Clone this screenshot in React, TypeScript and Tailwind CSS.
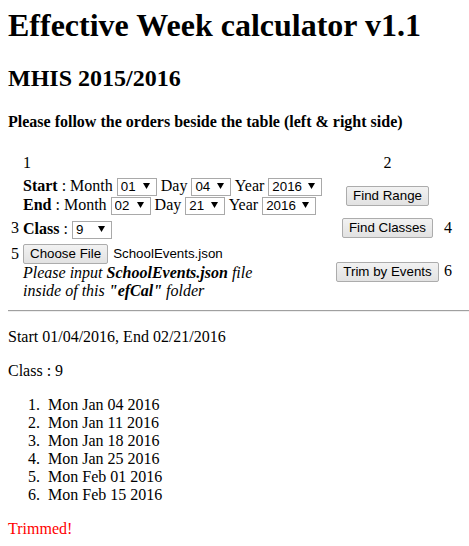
import React from 'react'

const sans = "font-['Liberation_Sans',Arial,sans-serif]"

const weeks = ['Mon Jan 04 2016', 'Mon Jan 11 2016', 'Mon Jan 18 2016', 'Mon Jan 25 2016', 'Mon Feb 01 2016', 'Mon Feb 15 2016']

function Sel({ value, w }: { value: string; w: string }) {
    return (
        <span className={`relative inline-block h-[18px] shrink-0 ${w}`}>
            <select defaultValue={value} className={`${sans} appearance-none w-full h-full bg-white border border-[#a9a9a9] pl-[3px] text-[13.33px] leading-[16px] text-black rounded-none`}>
                <option value={value}>{value}</option>
            </select>
            <svg className="absolute right-[7px] top-[6px] pointer-events-none" width="7" height="6" viewBox="0 0 7 6">
                <path d="M0 0H7L3.5 6Z" fill="#000" />
            </svg>
        </span>
    )
}

function Btn({ children }: { children: React.ReactNode }) {
    return (
        <button className={`${sans} h-[20px] px-[6px] text-[13.33px] leading-[18px] text-black border border-[#acacac] rounded-[2px] bg-gradient-to-b from-[#f2f2f2] to-[#e2e2e2]`}>
            {children}
        </button>
    )
}

export default function App() {
    return (
        <div className="px-2 pb-4 text-black bg-white font-['Liberation_Serif','Times_New_Roman',serif] text-[16px] leading-[18px]">
            <h1 className="pt-[7px] text-[32px] leading-[37px] font-bold">Effective Week calculator v1.1</h1>
            <h2 className="mt-[20px] text-[24px] leading-[28px] font-bold">MHIS 2015/2016</h2>
            <h4 className="mt-[21px] font-bold">Please follow the orders beside the table (left &amp; right side)</h4>

            <div className="mt-[23px] grid grid-cols-[14px_309px_113px_auto] gap-y-1 items-center">
                {/* row 1 */}
                <div />
                <div className="pl-px">1</div>
                <div className="text-center">2</div>
                <div />

                {/* row 2 */}
                <div />
                <div className="pl-px whitespace-pre">
                    <div className="flex items-center h-[19px]">
                        <span className="font-bold">Start</span><span> : Month </span>
                        <Sel value="01" w="w-[40px]" /><span> Day </span>
                        <Sel value="04" w="w-[40px]" /><span> Year </span>
                        <Sel value="2016" w="w-[54px]" />
                    </div>
                    <div className="flex items-center h-[19px]">
                        <span className="font-bold">End</span><span> : Month </span>
                        <Sel value="02" w="w-[40px]" /><span> Day </span>
                        <Sel value="21" w="w-[40px]" /><span> Year </span>
                        <Sel value="2016" w="w-[54px]" />
                    </div>
                </div>
                <div className="flex justify-center pt-px"><Btn>Find Range</Btn></div>
                <div />

                {/* row 3 */}
                <div className="pl-[3px]">3</div>
                <div className="pl-px flex items-center whitespace-pre pt-px">
                    <span className="font-bold">Class</span><span> : </span>
                    <Sel value="9" w="w-[40px]" />
                </div>
                <div className="flex justify-center"><Btn>Find Classes</Btn></div>
                <div>4</div>

                {/* row 4 */}
                <div className="pl-[3px] self-start pt-[3px]">5</div>
                <div className="pl-px">
                    <div className="flex items-center h-[22px] gap-[5px] pt-px">
                        <Btn>Choose File</Btn>
                        <span className={`${sans} text-[13.33px]`}>SchoolEvents.json</span>
                    </div>
                    <p className="italic">
                        Please input <b>SchoolEvents.json</b> file<br />
                        inside of this <b>"efCal"</b> folder
                    </p>
                </div>
                <div className="flex justify-center pt-px"><Btn>Trim by Events</Btn></div>
                <div>6</div>
            </div>

            <hr className="mt-[10px] -mr-2 border-t border-t-[#a0a0a0] border-b border-b-[#eeeeee]" />

            <p className="mt-[16px]">Start 01/04/2016, End 02/21/2016</p>
            <p className="mt-[16px]">Class : 9</p>
            <ol className="mt-[16px] pl-[20px]">
                {weeks.map((w, i) => (
                    <li key={w} className="flex">
                        <span className="w-[20px]">{i + 1}.</span>
                        <span>{w}</span>
                    </li>
                ))}
            </ol>
            <p className="mt-[16px] text-[#ff0000]">Trimmed!</p>
        </div>
    )
}
